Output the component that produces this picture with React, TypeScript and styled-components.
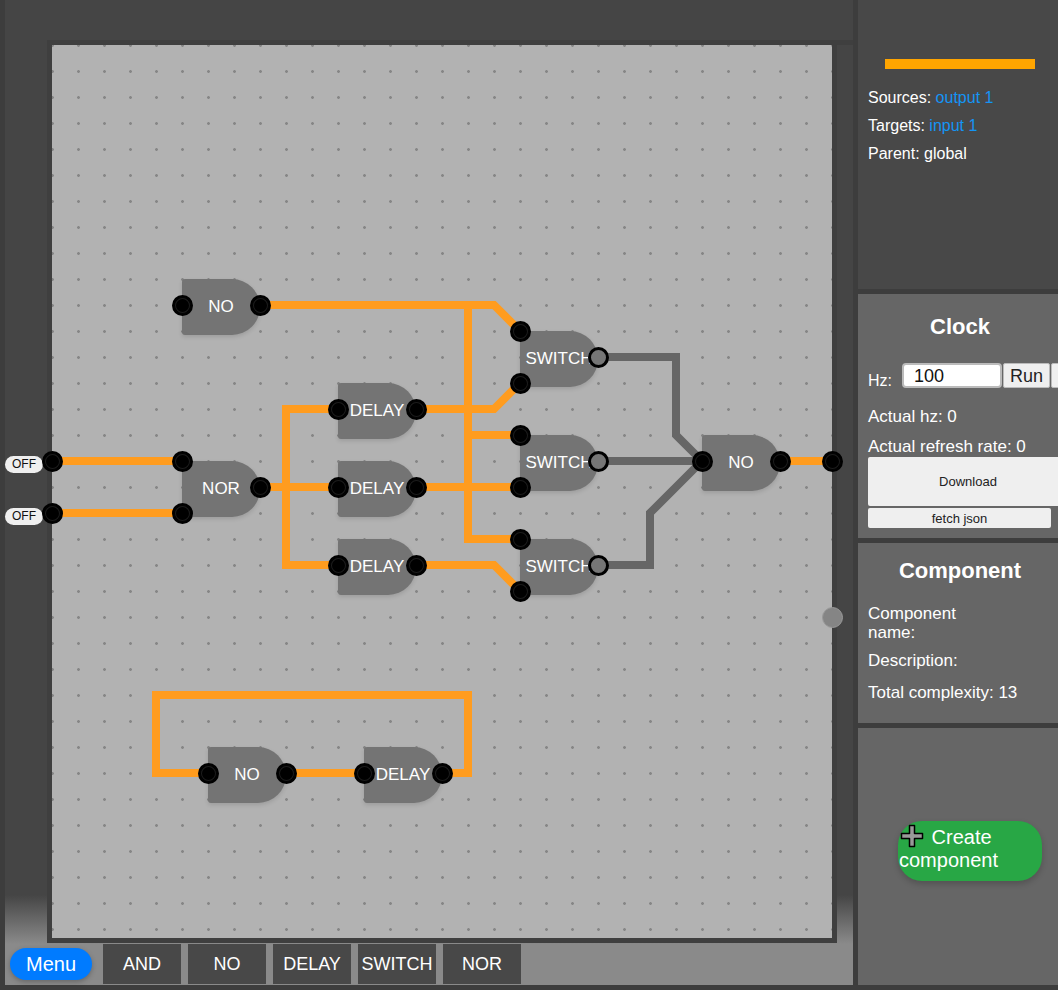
import React from 'react'
import styled, { createGlobalStyle } from 'styled-components'

const GlobalStyle = createGlobalStyle`
  html, body {
    margin: 0;
    height: 100%;
    overflow: hidden;
    background: #3d3d3d;
    font-family: "Liberation Sans", Arial, sans-serif;
    color: white;
  }
`

const Page = styled.div`
  width: 1058px;
  height: 990px;
  padding: 0 0 5px 5px;
  box-sizing: border-box;
  display: flex;
  gap: 5px;
  overflow: hidden;
`

const Workspace = styled.main`
  width: 848px;
  flex: none;
  display: flex;
  flex-direction: column;
  background: linear-gradient(to bottom, #454545 0, #454545 895px, #8a8a8a 944px);
`

const Board = styled.div`
  position: relative;
  flex: none;
  box-sizing: border-box;
  width: 790px;
  height: 903px;
  margin: 40px 0 0 42px;
  border: 5px solid #3f3f3f;
  background-color: #b2b2b2;
  background-image: radial-gradient(circle at 13.5px 13.5px, #868686 1px, transparent 1.7px);
  background-size: 26px 26px;
  background-position: -13px -13px;

  /* the top edge carries on to the end of the workspace */
  &::before {
    content: '';
    position: absolute;
    left: 785px;
    top: -5px;
    width: 16px;
    height: 5px;
    background: #3f3f3f;
  }
`

const Wires = styled.svg`
  position: absolute;
  left: -52px;
  top: -45px;
  width: 1058px;
  height: 990px;
  overflow: visible;
  pointer-events: none;
`

const Gate = styled.div<{ $x: number; $y: number }>`
  position: absolute;
  left: ${p => p.$x - 52}px;
  top: ${p => p.$y - 45}px;
  width: 78px;
  height: 56px;
  display: flex;
  align-items: center;
  justify-content: center;
  border-radius: 3px 28px 28px 3px;
  background: #747474;
  box-shadow: 0 2px 4px rgba(0, 0, 0, 0.12);
  font-size: 17px;
  white-space: nowrap;
`

const Pin = styled.span<{ $x: number; $y: number; $off?: boolean }>`
  position: absolute;
  left: ${p => p.$x - 10}px;
  top: ${p => p.$y - 10}px;
  width: 21px;
  height: 21px;
  box-sizing: border-box;
  border-radius: 50%;
  border: ${p => (p.$off ? '3px solid #000' : '2px solid #000')};
  background: ${p => (p.$off ? '#767676' : '#000')};
  box-shadow: ${p => (p.$off ? 'none' : 'inset 0 0 0 1px #000, inset 0 0 0 2px #1c1c1c')};
`

const BoardPin = styled(Pin)`
  left: ${p => p.$x - 62}px;
  top: ${p => p.$y - 55}px;
`

const Knob = styled.span`
  position: absolute;
  left: 770px;
  top: 562px;
  width: 21px;
  height: 21px;
  box-sizing: border-box;
  border-radius: 50%;
  border: 1px solid #999;
  background: #858585;
`

const SwitchLabel = styled.span<{ $y: number }>`
  position: absolute;
  left: -47px;
  top: ${p => p.$y - 45 - 8}px;
  width: 38px;
  height: 17px;
  border-radius: 9px;
  background: #efefef;
  color: #111;
  font-size: 12px;
  line-height: 17px;
  text-align: center;
`

const Toolbar = styled.nav`
  flex: 1;
  display: flex;
  align-items: center;
  padding-left: 5px;
`

const MenuButton = styled.button`
  width: 82px;
  height: 32px;
  margin-right: 11px;
  padding: 0;
  border: none;
  border-radius: 16px;
  background: #007bff;
  box-shadow: 0 2px 5px rgba(0, 0, 0, 0.25);
  color: white;
  font: 20px "Liberation Sans", Arial, sans-serif;
`

const ToolItem = styled.div`
  width: 78px;
  height: 40px;
  margin-right: 7px;
  display: flex;
  align-items: center;
  justify-content: center;
  background: #484848;
  font-size: 18px;
  white-space: nowrap;
`

const Sidebar = styled.aside`
  width: 204px;
  flex: none;
  display: flex;
  flex-direction: column;
  gap: 5px;
`

const Panel = styled.section<{ $h: number; $dark?: boolean }>`
  height: ${p => p.$h}px;
  flex: none;
  position: relative;
  box-sizing: border-box;
  padding: 0 10px;
  background: ${p => (p.$dark ? '#484848' : '#666')};
  font-size: 17px;
`

const SignalBar = styled.div`
  width: 150px;
  height: 10px;
  margin: 59px 0 0 17px;
  background: #ffa500;
`

const InfoLine = styled.p<{ $top?: number }>`
  margin: ${p => p.$top ?? 0}px 0 0;
  line-height: 18px;
`

const SignalLine = styled(InfoLine)`
  font-size: 16px;
`

const LinkText = styled.span`
  color: #1494f5;
`

const PanelTitle = styled.h2<{ $top: number }>`
  margin: ${p => p.$top}px 0 0;
  font-size: 22px;
  line-height: 26px;
  font-weight: bold;
  text-align: center;
`

const HzRow = styled.div`
  display: flex;
  align-items: flex-end;
  margin-top: 23px;
  width: 300px;
`

const HzLabel = styled.label`
  width: 34px;
  line-height: 14px;
  font-size: 16px;
`

const HzInput = styled.input`
  width: 100px;
  height: 25px;
  box-sizing: border-box;
  padding: 2px 10px 0;
  border: 2px solid #bbb;
  border-radius: 4px;
  background: #fff;
  color: #111;
  font: 18px "Liberation Sans", Arial, sans-serif;
`

const SmallButton = styled.button`
  height: 25px;
  margin-left: 1px;
  padding: 2px 0 0;
  width: 47px;
  box-sizing: border-box;
  border: 1px solid #bbb;
  border-radius: 2px;
  background: #efefef;
  color: #222;
  font: 18px "Liberation Sans", Arial, sans-serif;
`

const DownloadButton = styled.button<{ $top: number }>`
  display: block;
  width: 200px;
  height: 49px;
  margin-top: ${p => p.$top}px;
  padding: 0;
  border: none;
  border-radius: 2px;
  background: #efefef;
  color: #222;
  font: 13px "Liberation Sans", Arial, sans-serif;
`

const FetchButton = styled(DownloadButton)`
  width: 183px;
  height: 20px;
`

const NameField = styled.p`
  margin: 20px 0 0;
  width: 110px;
  line-height: 19px;
`

const CreatePanel = styled(Panel)`
  padding: 93px 0 0 40px;
`

const CreateButton = styled.button`
  display: block;
  width: 144px;
  height: 60px;
  padding: 0 0 6px 1px;
  border: none;
  border-radius: 24px;
  background: #28a745;
  box-shadow: 0 3px 6px rgba(0, 0, 0, 0.2);
  color: white;
  font: 20px/23px "Liberation Sans", Arial, sans-serif;
  text-align: left;
`

const PlusIcon = styled.svg`
  width: 24px;
  height: 24px;
  margin: 0 2px 0 1px;
  vertical-align: -4px;
`

type GateSpec = {
  label: string
  x: number
  y: number
  inputs: number[]
  off?: boolean
}

// output pin always sits halfway down the right hand edge
const gates: GateSpec[] = [
  { label: 'NO', x: 182, y: 279, inputs: [26] },
  { label: 'NOR', x: 182, y: 461, inputs: [0, 52] },
  { label: 'DELAY', x: 338, y: 383, inputs: [26] },
  { label: 'DELAY', x: 338, y: 461, inputs: [26] },
  { label: 'DELAY', x: 338, y: 539, inputs: [26] },
  { label: 'SWITCH', x: 520, y: 331, inputs: [0, 52], off: true },
  { label: 'SWITCH', x: 520, y: 435, inputs: [0, 52], off: true },
  { label: 'SWITCH', x: 520, y: 539, inputs: [0, 52], off: true },
  { label: 'NO', x: 702, y: 435, inputs: [26] },
  { label: 'NO', x: 208, y: 747, inputs: [26] },
  { label: 'DELAY', x: 364, y: 747, inputs: [26] },
]

const liveWires = [
  '260,305 494,305 520,331',
  '260,487 338,487',
  '338,409 286,409 286,565 338,565',
  '416,409 494,409 520,383',
  '416,487 520,487',
  '416,565 494,565 520,591',
  '468,305 468,539 520,539',
  '468,435 520,435',
  '780,461 832,461',
  '52,461 182,461',
  '52,513 182,513',
  '442,773 468,773 468,695 156,695 156,773 208,773',
  '286,773 364,773',
]

const deadWires = [
  '598,357 676,357 676,435 702,461',
  '598,461 702,461',
  '598,565 650,565 650,513 702,461',
]

const App: React.FC = () => {
  return (
    <Page>
      <GlobalStyle />
      <Workspace>
        <Board>
          <Wires viewBox="0 0 1058 990" fill="none" strokeWidth="8">
            {liveWires.map(points => (
              <polyline key={points} points={points} stroke="#ff9c1f" />
            ))}
            {deadWires.map(points => (
              <polyline key={points} points={points} stroke="#666" />
            ))}
          </Wires>

          {gates.map(gate => (
            <Gate key={`${gate.x}-${gate.y}`} $x={gate.x} $y={gate.y}>
              {gate.label}
              {gate.inputs.map(offset => (
                <Pin key={offset} $x={0} $y={offset} />
              ))}
              <Pin $x={78} $y={26} $off={gate.off} />
            </Gate>
          ))}

          <SwitchLabel $y={464}>OFF</SwitchLabel>
          <SwitchLabel $y={516}>OFF</SwitchLabel>
          <BoardPin $x={52} $y={461} />
          <BoardPin $x={52} $y={513} />
          <BoardPin $x={832} $y={461} />
          <Knob />
        </Board>

        <Toolbar>
          <MenuButton>Menu</MenuButton>
          <ToolItem>AND</ToolItem>
          <ToolItem>NO</ToolItem>
          <ToolItem>DELAY</ToolItem>
          <ToolItem>SWITCH</ToolItem>
          <ToolItem>NOR</ToolItem>
        </Toolbar>
      </Workspace>

      <Sidebar>
        <Panel $h={289} $dark>
          <SignalBar />
          <SignalLine $top={20}>
            Sources: <LinkText>output 1</LinkText>
          </SignalLine>
          <SignalLine $top={10}>
            Targets: <LinkText>input 1</LinkText>
          </SignalLine>
          <SignalLine $top={10}>Parent: global</SignalLine>
        </Panel>

        <Panel $h={244}>
          <PanelTitle $top={20}>Clock</PanelTitle>
          <HzRow>
            <HzLabel>Hz:</HzLabel>
            <HzInput defaultValue="100" />
            <SmallButton>Run</SmallButton>
            <SmallButton />
          </HzRow>
          <InfoLine $top={20}>Actual hz: 0</InfoLine>
          <InfoLine $top={12}>Actual refresh rate: 0</InfoLine>
          <DownloadButton $top={1}>Download</DownloadButton>
          <FetchButton $top={2}>fetch json</FetchButton>
        </Panel>

        <Panel $h={180}>
          <PanelTitle $top={15}>Component</PanelTitle>
          <NameField>Component name:</NameField>
          <InfoLine $top={10}>Description:</InfoLine>
          <InfoLine $top={14}>Total complexity: 13</InfoLine>
        </Panel>

        <CreatePanel $h={257}>
          <CreateButton>
            <PlusIcon viewBox="0 0 24 24">
              <path
                d="M9.5 1.5h5v8h8v5h-8v8h-5v-8h-8v-5h8z"
                fill="#999"
                stroke="#000"
                strokeWidth="1.5"
                strokeLinejoin="round"
              />
            </PlusIcon>
            {' '}Create component
          </CreateButton>
        </CreatePanel>
      </Sidebar>
    </Page>
  )
}

export default App
